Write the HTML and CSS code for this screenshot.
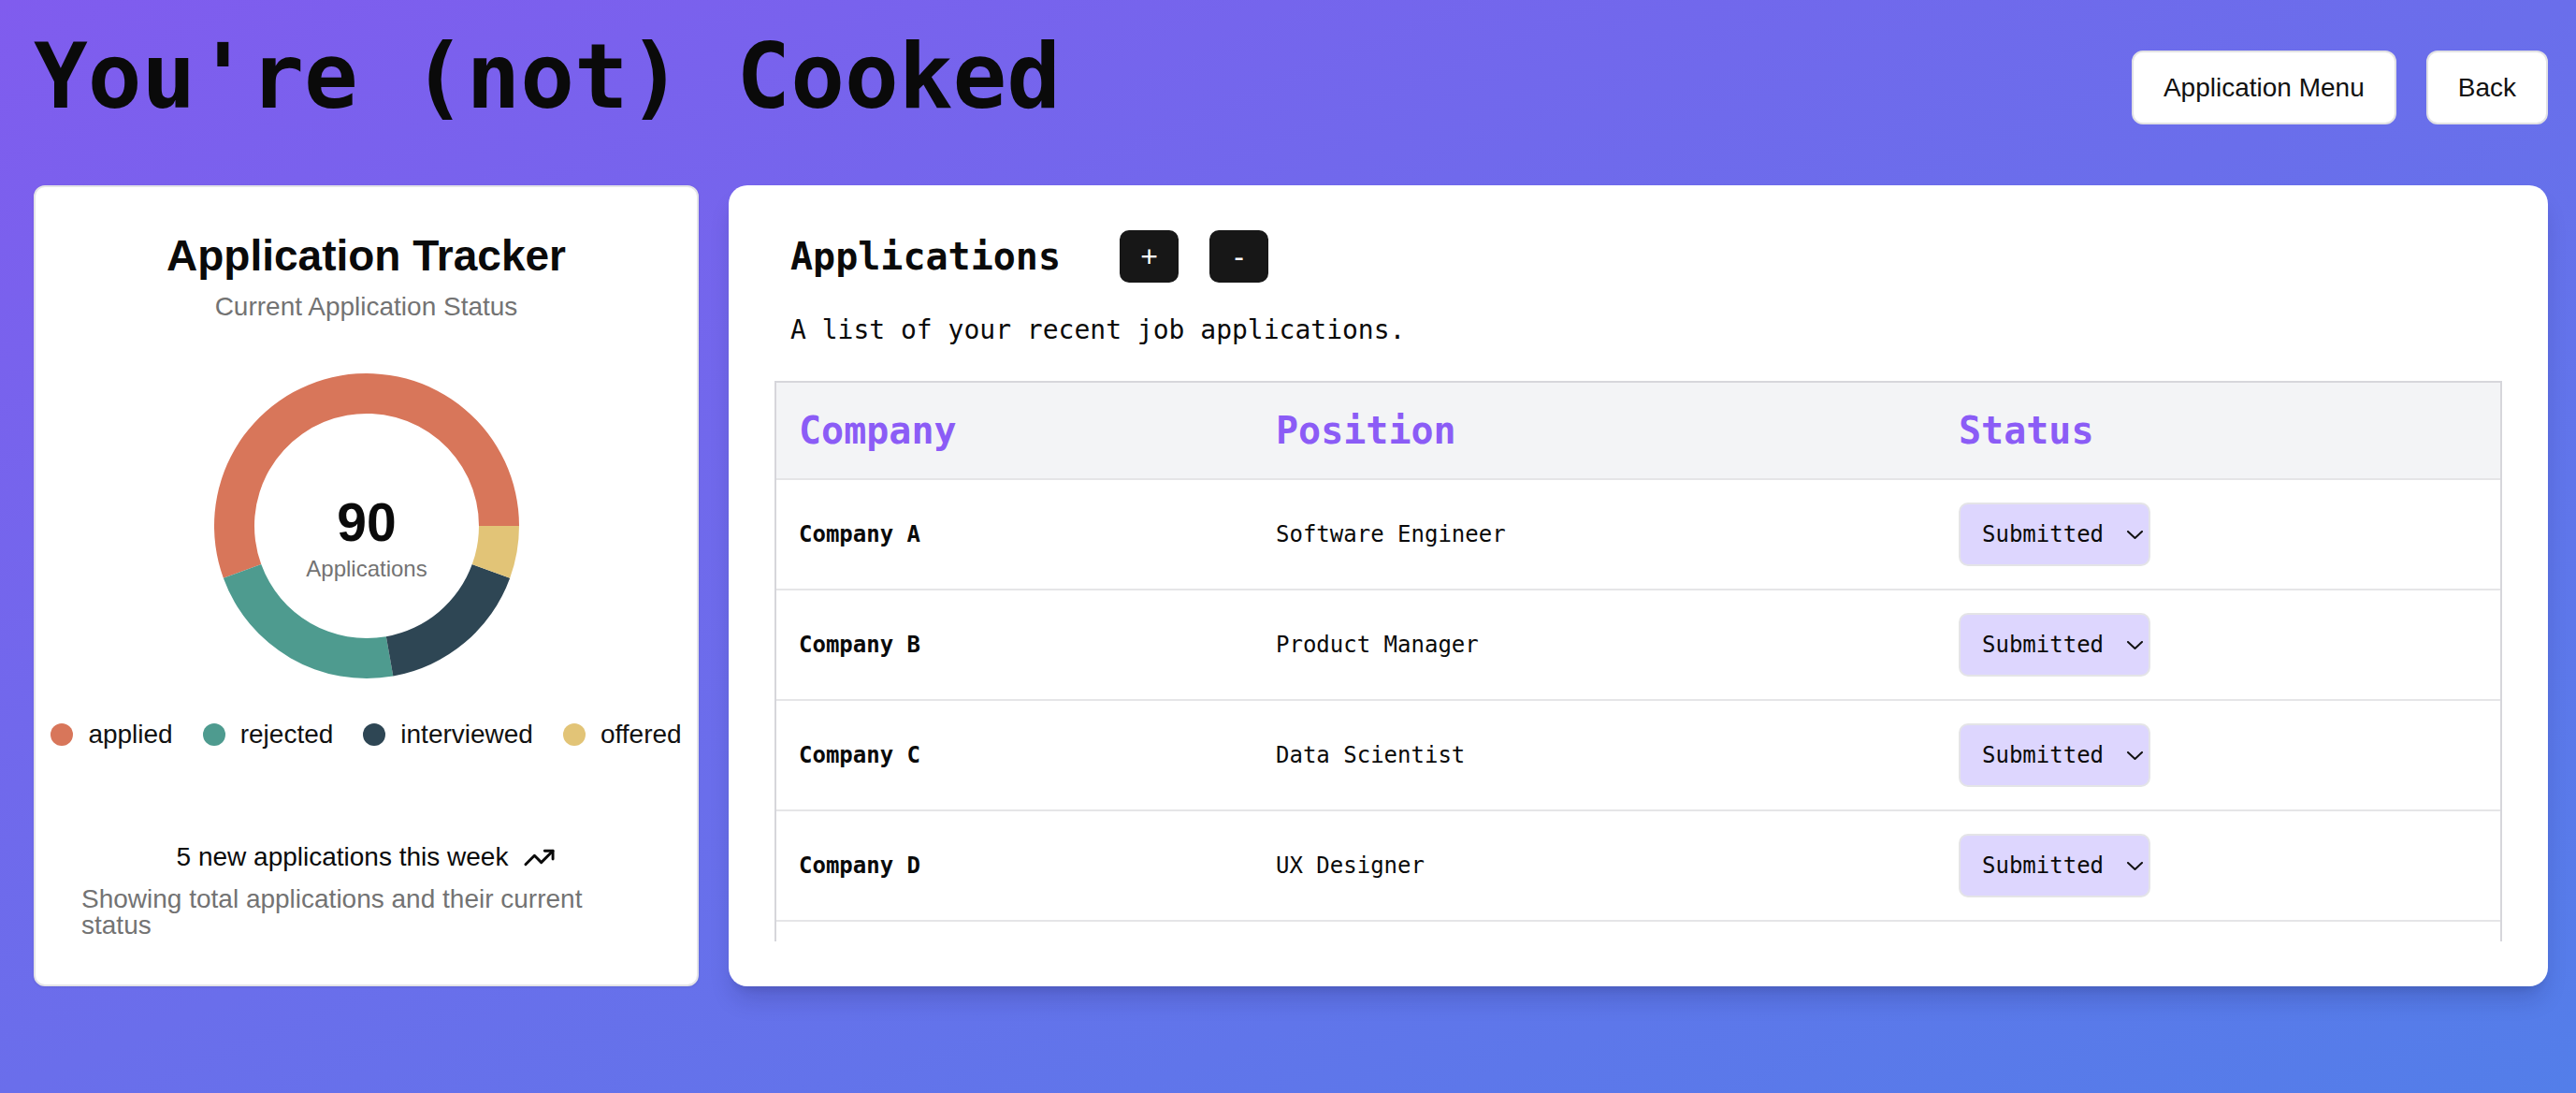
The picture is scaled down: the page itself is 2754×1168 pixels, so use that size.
FILE: index.html
```html
<!DOCTYPE html>
<html lang="en">
<head>
<meta charset="utf-8">
<title>You're (not) Cooked</title>
<link rel="stylesheet" href="styles.css">
</head>
<body>
<div class="page">
  <header class="topbar">
    <h1 class="site-title">You're (not) Cooked</h1>
    <nav class="top-actions">
      <button class="top-btn" type="button">Application Menu</button>
      <button class="top-btn" type="button">Back</button>
    </nav>
  </header>

  <main class="content">
    <section class="tracker-card">
      <h2 class="tracker-title">Application Tracker</h2>
      <p class="tracker-sub">Current Application Status</p>
      <div class="chart">
        <svg class="donut" width="326" height="326" viewBox="0 0 326 326">
          <path class="seg-applied" d="M 326 163 A 163 163 0 1 0 9.83 218.75 L 50.24 204.04 A 120 120 0 1 1 283 163 Z"/>
          <path class="seg-rejected" d="M 9.83 218.75 A 163 163 0 0 0 191.30 323.52 L 183.84 281.18 A 120 120 0 0 1 50.24 204.04 Z"/>
          <path class="seg-interviewed" d="M 191.30 323.52 A 163 163 0 0 0 316.17 218.75 L 275.76 204.04 A 120 120 0 0 1 183.84 281.18 Z"/>
          <path class="seg-offered" d="M 316.17 218.75 A 163 163 0 0 0 326 163 L 283 163 A 120 120 0 0 1 275.76 204.04 Z"/>
          <text class="chart-num" x="163" y="179" text-anchor="middle">90</text>
          <text class="chart-label" x="163" y="217" text-anchor="middle">Applications</text>
        </svg>
      </div>
      <ul class="legend">
        <li class="legend-item"><span class="dot dot-applied"></span>applied</li>
        <li class="legend-item"><span class="dot dot-rejected"></span>rejected</li>
        <li class="legend-item"><span class="dot dot-interviewed"></span>interviewed</li>
        <li class="legend-item"><span class="dot dot-offered"></span>offered</li>
      </ul>
      <footer class="tracker-foot">
        <div class="trend">
          <span>5 new applications this week</span>
          <svg class="trend-icon" width="35" height="35" viewBox="0 0 24 24" fill="none" stroke="currentColor" stroke-width="2" stroke-linecap="round" stroke-linejoin="round">
            <polyline points="22 7 13.5 15.5 8.5 10.5 2 17"/>
            <polyline points="16 7 22 7 22 13"/>
          </svg>
        </div>
        <div class="foot-note">Showing total applications and their current status</div>
      </footer>
    </section>

    <section class="apps-card">
      <div class="apps-head">
        <h2 class="apps-title">Applications</h2>
        <button class="icon-btn icon-btn-first" type="button">+</button>
        <button class="icon-btn" type="button">-</button>
      </div>
      <p class="apps-desc">A list of your recent job applications.</p>
      <div class="table-wrap">
        <table class="apps-table">
          <colgroup>
            <col class="col-company">
            <col class="col-position">
            <col class="col-status">
          </colgroup>
          <thead>
            <tr><th>Company</th><th>Position</th><th>Status</th></tr>
          </thead>
          <tbody>
            <tr>
              <td class="company">Company A</td>
              <td>Software Engineer</td>
              <td><div class="status"><select class="status-select"><option>Submitted</option><option>Interviewed</option><option>Rejected</option><option>Offered</option></select><svg class="chev" width="17" height="9" viewBox="0 0 17 9" fill="none" stroke="#111" stroke-width="2" stroke-linecap="round" stroke-linejoin="round"><polyline points="1 1 8.5 8 16 1"/></svg></div></td>
            </tr>
            <tr>
              <td class="company">Company B</td>
              <td>Product Manager</td>
              <td><div class="status"><select class="status-select"><option>Submitted</option><option>Interviewed</option><option>Rejected</option><option>Offered</option></select><svg class="chev" width="17" height="9" viewBox="0 0 17 9" fill="none" stroke="#111" stroke-width="2" stroke-linecap="round" stroke-linejoin="round"><polyline points="1 1 8.5 8 16 1"/></svg></div></td>
            </tr>
            <tr>
              <td class="company">Company C</td>
              <td>Data Scientist</td>
              <td><div class="status"><select class="status-select"><option>Submitted</option><option>Interviewed</option><option>Rejected</option><option>Offered</option></select><svg class="chev" width="17" height="9" viewBox="0 0 17 9" fill="none" stroke="#111" stroke-width="2" stroke-linecap="round" stroke-linejoin="round"><polyline points="1 1 8.5 8 16 1"/></svg></div></td>
            </tr>
            <tr>
              <td class="company">Company D</td>
              <td>UX Designer</td>
              <td><div class="status"><select class="status-select"><option>Submitted</option><option>Interviewed</option><option>Rejected</option><option>Offered</option></select><svg class="chev" width="17" height="9" viewBox="0 0 17 9" fill="none" stroke="#111" stroke-width="2" stroke-linecap="round" stroke-linejoin="round"><polyline points="1 1 8.5 8 16 1"/></svg></div></td>
            </tr>
          </tbody>
        </table>
      </div>
    </section>
  </main>
</div>
</body>
</html>
```

FILE: styles.css
```css
* {
  box-sizing: border-box;
}

html, body {
  margin: 0;
  padding: 0;
  height: 100%;
}

body {
  background: linear-gradient(to bottom right, #805cee 0%, #6a6eeb 50%, #537ee9 100%);
  font-family: "Liberation Sans", Arial, sans-serif;
  color: #0a0a0a;
  overflow: hidden;
}

.page {
  padding: 34px 30px 0 36px;
}

/* Top bar */
.topbar {
  display: flex;
  justify-content: space-between;
  align-items: flex-start;
}

.site-title {
  margin: 0;
  font-family: "DejaVu Sans Mono", monospace;
  font-weight: 700;
  font-size: 96px;
  line-height: 96px;
  color: #0a0a0a;
}

.top-actions {
  display: flex;
  gap: 32px;
  margin-top: 20px;
}

.top-btn {
  height: 79px;
  padding: 0 32px;
  background: #ffffff;
  border: 2px solid #e2e2e4;
  border-radius: 12px;
  font-family: "Liberation Sans", Arial, sans-serif;
  font-size: 28px;
  color: #111111;
}

/* Main area */
.content {
  display: flex;
  gap: 32px;
  margin-top: 65px;
  align-items: stretch;
}

/* Tracker card */
.tracker-card {
  flex: 0 0 711px;
  width: 711px;
  min-width: 0;
  background: #ffffff;
  border: 2px solid #e4e4e7;
  border-radius: 12px;
  padding: 49px;
  display: flex;
  flex-direction: column;
  align-items: center;
  box-shadow: 0 1px 3px rgba(0, 0, 0, 0.08);
}

.tracker-title {
  margin: 2px 0 0;
  font-size: 46px;
  line-height: 45px;
  font-weight: 700;
  color: #0a0a0a;
  white-space: nowrap;
}

.tracker-sub {
  margin: 18px 0 0;
  font-size: 28px;
  line-height: 28px;
  color: #737373;
}

.chart {
  margin-top: 57px;
  height: 326px;
  display: flex;
  justify-content: center;
}

.donut {
  display: block;
}

.seg-applied { fill: #d8765a; }
.seg-rejected { fill: #4e9b8f; }
.seg-interviewed { fill: #2e4654; }
.seg-offered { fill: #e2c477; }

.chart-num {
  font-family: "Liberation Sans", Arial, sans-serif;
  font-weight: 700;
  font-size: 57px;
  fill: #0a0a0a;
}

.chart-label {
  font-family: "Liberation Sans", Arial, sans-serif;
  font-size: 24px;
  fill: #737373;
}

.legend {
  list-style: none;
  margin: 46px 0 0;
  padding: 0;
  width: max-content;
  flex: 0 0 auto;
  display: flex;
  justify-content: center;
  gap: 32px;
  font-size: 28px;
  line-height: 28px;
  color: #111111;
}

.legend-item {
  display: flex;
  align-items: center;
  gap: 16px;
}

.dot {
  width: 24px;
  height: 24px;
  border-radius: 50%;
  display: block;
}

.dot-applied { background: #d8765a; }
.dot-rejected { background: #4e9b8f; }
.dot-interviewed { background: #2e4654; }
.dot-offered { background: #e2c477; }

.tracker-foot {
  margin-top: 103px;
  width: 100%;
  display: flex;
  flex-direction: column;
  align-items: center;
  gap: 17px;
  font-size: 28px;
  line-height: 28px;
}

.trend {
  display: flex;
  align-items: center;
  gap: 16px;
  height: 28px;
  color: #0a0a0a;
}

.trend-icon {
  display: block;
  flex: 0 0 auto;
}

.foot-note {
  color: #737373;
}

/* Applications card */
.apps-card {
  flex: 1 1 auto;
  min-width: 0;
  background: #ffffff;
  border-radius: 20px;
  padding: 48px 49px;
  box-shadow: 0 18px 26px -6px rgba(20, 20, 70, 0.2), 0 7px 10px -6px rgba(0, 0, 0, 0.12);
  font-family: "DejaVu Sans Mono", monospace;
}

.apps-head {
  display: flex;
  align-items: center;
  height: 56px;
  padding-left: 17px;
}

.apps-title {
  margin: 0;
  font-size: 40px;
  line-height: 40px;
  font-weight: 700;
  color: #0a0a0a;
}

.icon-btn {
  width: 63px;
  height: 56px;
  margin-left: 33px;
  border: none;
  border-radius: 10px;
  background: #171717;
  color: #ffffff;
  font-family: "Liberation Sans", Arial, sans-serif;
  font-size: 32px;
  line-height: 1;
  padding: 0;
}

.icon-btn-first {
  margin-left: 63px;
}

.apps-desc {
  margin: 37px 0 0;
  padding-left: 17px;
  font-size: 28px;
  line-height: 28px;
  color: #0a0a0a;
}

.table-wrap {
  margin-top: 40px;
  height: 599px;
  border: 2px solid #d6d6db;
  border-bottom: none;
  overflow: hidden;
}

.apps-table {
  width: 100%;
  table-layout: fixed;
  border-collapse: separate;
  border-spacing: 0;
}

.col-company { width: 510px; }
.col-position { width: 730px; }

.apps-table th {
  height: 104px;
  padding: 0 24px;
  background: #f3f4f6;
  text-align: left;
  font-size: 40px;
  font-weight: 700;
  color: #8b5cf6;
  border-bottom: 2px solid #e5e5e7;
  vertical-align: middle;
}

.apps-table td {
  height: 118px;
  padding: 0 24px;
  font-size: 24px;
  color: #0a0a0a;
  border-bottom: 2px solid #e5e5e7;
  vertical-align: middle;
}

.apps-table td.company {
  font-weight: 700;
}

.status {
  position: relative;
  width: 205px;
  height: 68px;
}

.status-select {
  appearance: none;
  -webkit-appearance: none;
  width: 205px;
  height: 68px;
  padding: 0 48px 0 23px;
  background: #ddd6fe;
  border: 2px solid #e4e4e7;
  border-radius: 10px;
  font-family: "DejaVu Sans Mono", monospace;
  font-size: 24px;
  color: #0a0a0a;
}

.chev {
  position: absolute;
  right: 8px;
  top: 30px;
  pointer-events: none;
}
```
